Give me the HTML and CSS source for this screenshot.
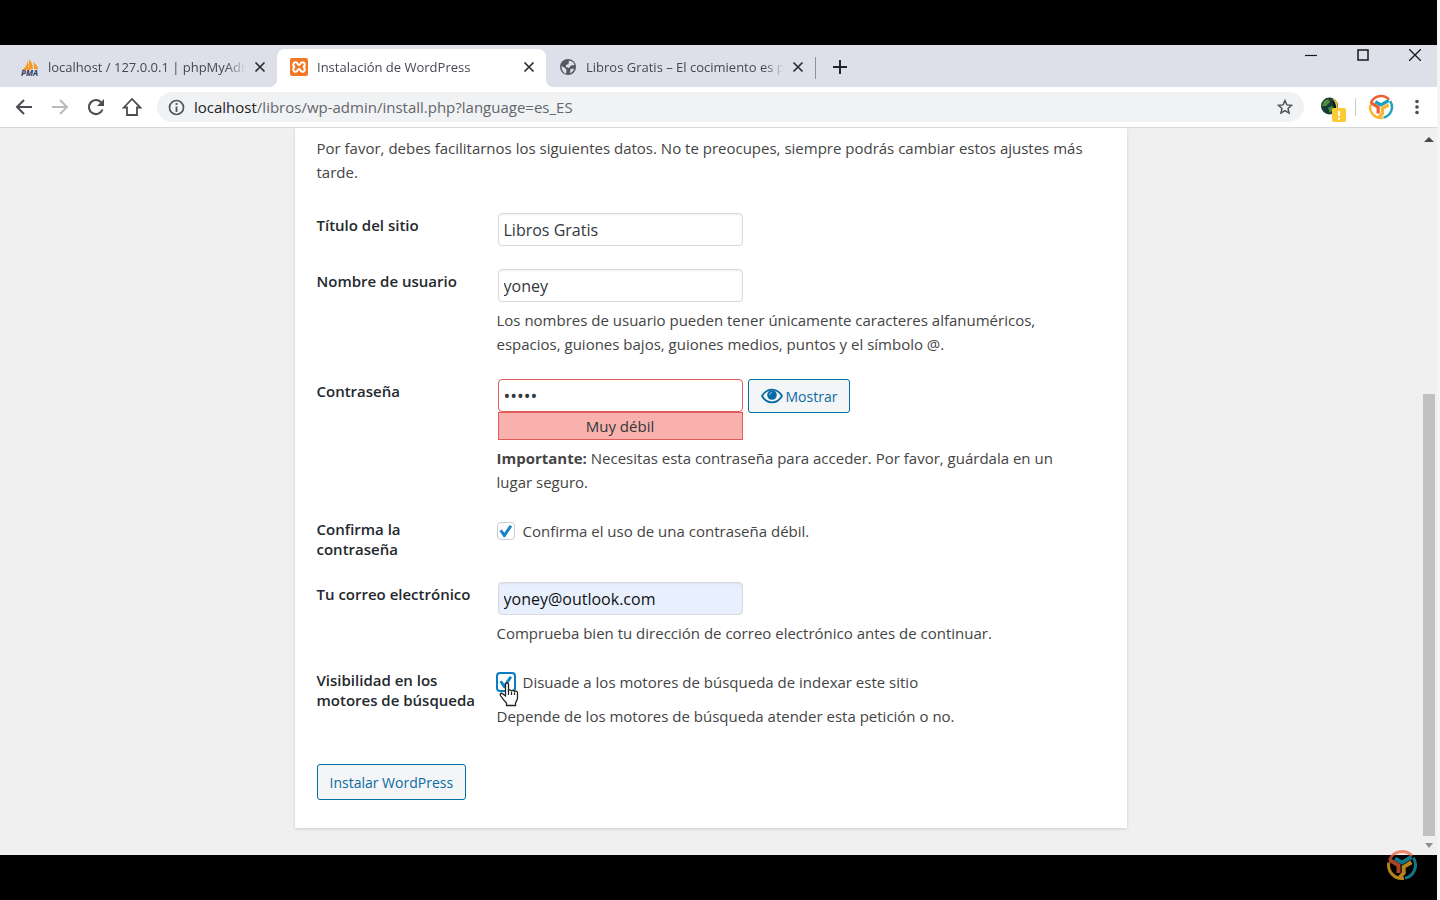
FILE: index.html
```html
<!DOCTYPE html>
<html lang="es">
<head>
<meta charset="utf-8">
<title>Instalación de WordPress</title>
<link rel="stylesheet" href="styles.css">
</head>
<body>
<svg class="defs" aria-hidden="true">
  <symbol id="close" viewBox="0 0 12 12"><path d="M1.500 1.500l9 9M10.500 1.500l-9 9" fill="none" stroke="#2b2d31" stroke-width="1.700"/></symbol>
  <symbol id="brand" viewBox="0 0 32 32">
    <g fill="none" stroke-width="3">
      <path d="M3.400 11.500A13.400 13.400 0 0 1 26 7" stroke="#ee5f35"/>
      <path d="M27.300 8.700A13.400 13.400 0 0 1 19 29.100" stroke="#1ba3bd"/>
      <path d="M18 29.300A13.400 13.400 0 0 1 2.800 13.500" stroke="#fbb42b"/>
    </g>
    <g fill="none" stroke-width="4">
      <path d="M3.500 11l9 5.200V24" stroke="#ee5f35"/>
      <path d="M9 9.500l7 4 9.500-5.500" stroke="#1ba3bd"/>
      <path d="M25.500 13.300l-7.800 4.500V24l-4.200 4.500" stroke="#fbb42b"/>
    </g>
  </symbol>
</svg>

<div class="screen">
  <header class="chrome">
    <div class="tabstrip">
      <div class="tab">
        <svg class="favicon" viewBox="0 0 20 20"><path d="M2 13C5 11 7 8 8 3l1 10zM9 13V2c3 3 4 7 4 10zM14 12c0-3 0-5-1-7 3 2 5 4 5 7z" fill="#f59a27"/><text x="1" y="19" font-size="8" font-weight="700" font-style="italic" fill="#34365f">PMA</text></svg>
        <span class="tab-title">localhost / 127.0.0.1 | phpMyAdmin</span>
        <button class="tab-close" aria-label="Cerrar pestaña"><svg width="12" height="12"><use href="#close"/></svg></button>
      </div>
      <div class="tab active">
        <svg class="favicon" viewBox="0 0 20 20"><rect x="1" y="1" width="18" height="18" rx="2" fill="#f37623"/><path d="M7.500 5.500c-4-1-4 4-1.500 4.500-2.500.5-2.500 5.500 1.500 4.500 1.500-.5 1-2.500 2.500-2.500s1 2 2.500 2.500c4 1 4-4 1.500-4.500 2.500-.5 2.500-5.500-1.500-4.500C11 6 11.500 8 10 8S9 6 7.500 5.500z" fill="none" stroke="#fff" stroke-width="2"/></svg>
        <span class="tab-title">Instalación de WordPress</span>
        <button class="tab-close" aria-label="Cerrar pestaña"><svg width="12" height="12"><use href="#close"/></svg></button>
      </div>
      <div class="tab">
        <svg class="favicon" viewBox="0 0 20 20"><circle cx="10" cy="10" r="8" fill="#55595f"/><path d="M3.500 9l3.500 2 1.500 2-.5 3.800C5.500 16 3.500 13 3.500 9zM11 3.500l4 1.500 1.500 3-3.500.5-2 2.500-3-1V8l2.500-1zM12.500 12l3.500-.5c-.5 2.500-2 4-4 4.800z" fill="#dde0e9"/></svg>
        <span class="tab-title">Libros Gratis – El cocimiento es poder</span>
        <button class="tab-close" aria-label="Cerrar pestaña"><svg width="12" height="12"><use href="#close"/></svg></button>
      </div>
      <span class="tab-divider"></span>
      <button class="new-tab" aria-label="Nueva pestaña"><svg width="14" height="14" viewBox="0 0 14 14"><path d="M7 0v14M0 7h14" stroke="#222529" stroke-width="2"/></svg></button>
      <div class="window-controls">
        <button aria-label="Minimizar"><svg width="12" height="12"><path d="M0 6.500h12" stroke="#17181b" stroke-width="1.200"/></svg></button>
        <button aria-label="Maximizar"><svg width="12" height="12"><rect x="1" y="1" width="10" height="10" fill="none" stroke="#17181b" stroke-width="1.500"/></svg></button>
        <button aria-label="Cerrar"><svg width="12" height="12"><path d="M0 0l12 12M12 0L0 12" stroke="#17181b" stroke-width="1.300"/></svg></button>
      </div>
    </div>

    <div class="toolbar">
      <nav class="nav-buttons">
        <button aria-label="Atrás"><svg width="18" height="18" viewBox="0 0 18 18"><path d="M17 9H2M9 2L2 9l7 7" fill="none" stroke="#4a4d52" stroke-width="2"/></svg></button>
        <button aria-label="Adelante"><svg width="18" height="18" viewBox="0 0 18 18"><path d="M1 9h15M9 2l7 7-7 7" fill="none" stroke="#b9bbbe" stroke-width="2"/></svg></button>
        <button aria-label="Recargar"><svg width="18" height="18" viewBox="0 0 18 18"><path d="M15.500 11.500A7 7 0 1 1 14 4.200" fill="none" stroke="#4a4d52" stroke-width="2.100"/><path d="M17 1v7h-7z" fill="#4a4d52"/></svg></button>
        <button aria-label="Inicio"><svg width="20" height="20" viewBox="0 0 20 20"><path d="M1.800 10.500L10 2l8.200 8.500H15V18H5v-7.500z" fill="none" stroke="#4a4d52" stroke-width="1.800"/></svg></button>
      </nav>
      <div class="omnibox">
        <svg width="17" height="17" viewBox="0 0 17 17"><circle cx="8.500" cy="8.500" r="7" fill="none" stroke="#53565b" stroke-width="1.700"/><path d="M8.500 7.500V13M8.500 4v2" stroke="#53565b" stroke-width="1.800"/></svg>
        <div class="url"><b>localhost</b>/libros/wp-admin/install.php?language=es_ES</div>
        <button aria-label="Añadir a marcadores"><svg width="16" height="16" viewBox="0 0 16 16"><path d="M8 1.500l1.900 4.400 4.700.4-3.600 3.100 1.100 4.700L8 11.600l-4.100 2.500L5 9.400 1.400 6.300l4.700-.4z" fill="none" stroke="#4a4d52" stroke-width="1.400"/></svg></button>
      </div>
      <div class="extensions">
        <button class="ext" aria-label="Extensión"><svg width="26" height="26" viewBox="0 0 26 26"><circle cx="9.500" cy="10" r="8.500" fill="#173d39"/><path d="M4 5l4-2 2 3-4 4H2zM8 12l4-2 2 3-4 4z" fill="#548d3c"/><path d="M12 2c6 2 7 8 4 13 0-5-1-9-4-13z" fill="#e8c33b"/><path d="M13 5c2 3 2.500 6 1.500 10" stroke="#111" stroke-width="2" fill="none"/><rect x="12" y="12" width="14" height="14" rx="2" fill="#fbcb32"/><path d="M19 15v5M19 21.500v2" stroke="#fff" stroke-width="2.200"/></svg></button>
        <span class="ext-divider"></span>
        <button class="profile" aria-label="Perfil"><svg width="26" height="26"><use href="#brand"/></svg></button>
        <button class="menu" aria-label="Menú"><svg width="4" height="16" fill="#4a4d52"><circle cx="2" cy="2.500" r="1.800"/><circle cx="2" cy="8" r="1.800"/><circle cx="2" cy="13.500" r="1.800"/></svg></button>
      </div>
    </div>
  </header>

  <div class="viewport">
    <main class="page">
      <form class="card">
        <p class="intro">Por favor, debes facilitarnos los siguientes datos. No te preocupes, siempre podrás cambiar estos ajustes más tarde.</p>

        <div class="row">
          <label class="row-label" for="site">Título del sitio</label>
          <div><input class="text" id="site" type="text" value="Libros Gratis"></div>
        </div>
        <div class="row">
          <label class="row-label" for="user">Nombre de usuario</label>
          <div>
            <input class="text" id="user" type="text" value="yoney">
            <p class="hint">Los nombres de usuario pueden tener únicamente caracteres alfanuméricos, espacios, guiones bajos, guiones medios, puntos y el símbolo @.</p>
          </div>
        </div>
        <div class="row">
          <label class="row-label" for="pass">Contraseña</label>
          <div>
            <div class="password">
              <input class="text weak" id="pass" type="password" value="yoney">
              <button class="btn show" type="button"><svg width="22" height="16" viewBox="0 0 22 16"><path d="M1 8c5-8.500 15-8.500 20 0-5 8.500-15 8.500-20 0z" fill="none" stroke="#0769a6" stroke-width="1.800"/><circle cx="11" cy="7" r="4.800" fill="#0769a6"/><path d="M8.500 7A2.500 2.500 0 0 1 11 4.500" stroke="#8fc0de" fill="none"/></svg>Mostrar</button>
            </div>
            <div class="strength">Muy débil</div>
            <p class="hint"><strong>Importante:</strong> Necesitas esta contraseña para acceder. Por favor, guárdala en un lugar seguro.</p>
          </div>
        </div>
        <div class="row">
          <label class="row-label" for="confirm">Confirma la contraseña</label>
          <div><label class="check"><input id="confirm" type="checkbox" checked>Confirma el uso de una contraseña débil.</label></div>
        </div>
        <div class="row">
          <label class="row-label" for="mail">Tu correo electrónico</label>
          <div>
            <input class="text autofill" id="mail" type="email" value="yoney@outlook.com">
            <p class="hint">Comprueba bien tu dirección de correo electrónico antes de continuar.</p>
          </div>
        </div>
        <div class="row">
          <label class="row-label" for="visibility">Visibilidad en los motores de búsqueda</label>
          <div>
            <label class="check focused"><input id="visibility" type="checkbox" checked>Disuade a los motores de búsqueda de indexar este sitio
              <svg class="pointer" width="20" height="25" viewBox="0 0 20 25"><path d="M6.500 14V2.500c0-2 3-2 3 0V9c0-1.500 3-1.500 3 .5 0-1.500 3-1.500 3 .5 0-1.500 3-1.300 3 .8V16c0 2-1.500 3.500-2 5v2.500H7.500V21C5.500 19 3 16 1.500 13.500c-1-2 1-3 2.500-1.500z" fill="#fff" stroke="#222" stroke-width="1.300"/><path d="M9.500 9v4M12.500 10v3M15.500 10.500V13" stroke="#222" stroke-width="1.200"/></svg>
            </label>
            <p class="hint">Depende de los motores de búsqueda atender esta petición o no.</p>
          </div>
        </div>

        <button class="btn submit" type="button">Instalar WordPress</button>
      </form>
    </main>
    <div class="scrollbar" aria-hidden="true">
      <svg width="10" height="6"><path d="M0 6l5-5 5 5z" fill="#4b4b4b"/></svg>
      <div class="track"><div class="thumb"></div></div>
      <svg width="10" height="6"><path d="M1 0l4 5 4-5z" fill="#8e8e8e"/></svg>
    </div>
  </div>
  <svg class="watermark" width="32" height="32"><use href="#brand"/></svg>
</div>
</body>
</html>
```
FILE: styles.css
```css
* { box-sizing: border-box; }

body {
  margin: 0;
  background: #f4f4f4;
  font-family: "Open Sans", "Noto Sans", sans-serif;
  font-size: 15px;
  color: #444;
}

button {
  border: 0;
  padding: 0;
  background: none;
  font: inherit;
  display: flex;
  align-items: center;
  justify-content: center;
}

p { margin: 0; }
.defs { position: absolute; width: 0; height: 0; }

.screen {
  position: relative;
  display: flex;
  flex-direction: column;
  height: 100vh;
  margin-right: 3px;
  padding: 45px 0;
  background: #000;
}

/* Tab strip */
.tabstrip {
  display: flex;
  align-items: flex-end;
  height: 42px;
  padding-left: 8px;
  background: #dde0e9;
}
.tab {
  position: relative;
  display: flex;
  align-items: center;
  width: 269px;
  height: 38px;
  padding: 0 9px 2px 12px;
  color: #45484e;
  font-size: 13px;
}
.tab.active { background: #fff; border-radius: 8px 8px 0 0; }
.tab.active::before,
.tab.active::after {
  content: "";
  position: absolute;
  bottom: 0;
  width: 8px;
  height: 8px;
}
.tab.active::before { right: 100%; background: radial-gradient(circle at 0 0, #dde0e9 8px, #fff 8px); }
.tab.active::after { left: 100%; background: radial-gradient(circle at 100% 0, #dde0e9 8px, #fff 8px); }
.favicon { flex: none; width: 20px; height: 20px; margin-right: 8px; }
.tab-title {
  flex: 1;
  overflow: hidden;
  white-space: nowrap;
  mask-image: linear-gradient(to left, transparent, #000 20px);
}
.tab-close { width: 16px; height: 16px; margin-left: 6px; }
.tab-divider { width: 1px; height: 22px; margin-bottom: 8px; background: #8d9096; }
.new-tab { width: 28px; height: 28px; margin: 0 0 6px 10px; }
.window-controls { display: flex; align-self: flex-start; gap: 8px; margin-left: auto; }
.window-controls button { width: 44px; height: 20px; }

/* Toolbar */
.toolbar {
  display: flex;
  align-items: center;
  height: 41px;
  padding-left: 6px;
  background: #fff;
  border-bottom: 1px solid #d6d7da;
}
.nav-buttons { display: flex; }
.nav-buttons button { width: 36px; height: 30px; }
.omnibox {
  flex: 1;
  display: flex;
  align-items: center;
  gap: 9px;
  height: 30px;
  margin-left: 7px;
  padding: 0 11px;
  border-radius: 15px;
  background: #f1f2f4;
}
.url { flex: 1; color: #63666b; font-size: 15px; }
.url b { font-weight: 400; color: #222; }
.extensions { display: flex; align-items: center; padding-right: 8px; }
.ext { width: 51px; height: 28px; padding: 4px 0 0 6px; }
.ext-divider { width: 1px; height: 18px; background: #c9cbcf; }
.profile { width: 49px; height: 28px; }
.menu { width: 24px; height: 28px; }

/* Page */
.viewport { flex: 1; display: flex; min-height: 0; background: #f0f0f0; }
.page { flex: 1; overflow: hidden; }
.card {
  max-width: 832px;
  margin: 0 auto;
  padding: 8px 22px 28px;
  background: #fff;
  box-shadow: 0 1px 3px rgba(0, 0, 0, 0.15);
}
.intro { margin-bottom: 29px; line-height: 24px; }
.row { display: grid; grid-template-columns: 180px 1fr; margin-bottom: 23px; }
.row-label { padding: 2px 16px 0 0; color: #23282d; font-weight: 600; font-size: 15px; line-height: 20px; }
.row > div { max-width: 560px; }
.hint { margin-top: 6px; line-height: 24px; }
.hint strong { font-weight: 700; }

.text {
  display: block;
  width: 245px;
  height: 33px;
  margin-left: 1px;
  padding: 0 5px;
  border: 1px solid #d9dadc;
  border-radius: 4px;
  background: #fff;
  box-shadow: inset 0 1px 2px rgba(0, 0, 0, 0.07);
  color: #32373c;
  font: inherit;
  font-size: 16px;
}
.text.autofill { background: #e8f0fe; color: #111; }
.text.weak { border-color: #e35b5b; box-shadow: none; font-size: 18px; }
.password { display: flex; gap: 5px; height: 33px; }
.strength {
  width: 245px;
  height: 28px;
  margin-left: 1px;
  border: 1px solid #e35b5b;
  background: #f8b1ad;
  color: #32373c;
  line-height: 26px;
  text-align: center;
}

.btn { border: 1px solid #0071a1; border-radius: 3px; background: #f3f5f6; color: #0b6ba3; font-size: 14px; }
.show { height: 34px; padding: 0 12px; gap: 3px; }
.submit { height: 36px; padding: 0 12px; margin-top: 36px; }

.check { position: relative; display: flex; align-items: center; gap: 8px; height: 28px; }
.check + .hint { margin-top: 8px; }
.check input {
  appearance: none;
  width: 18px;
  height: 18px;
  margin: 0;
  border: 1px solid #c9cdd1;
  border-radius: 4px;
  background: #fff;
}
.check input:checked::before {
  content: "";
  display: block;
  width: 14px;
  height: 14px;
  margin: 1px;
  background: #1583c4;
  clip-path: polygon(7% 50%, 23% 40%, 42% 62%, 80% 8%, 97% 17%, 47% 94%, 37% 94%);
}
.check.focused { margin-left: -1px; gap: 7px; }
.check.focused input { width: 20px; height: 20px; border: 2px solid #0b7cc0; }
.pointer { position: absolute; left: 3px; top: 14px; }

/* Scrollbar */
.scrollbar { display: flex; flex-direction: column; align-items: center; width: 16px; padding: 8px 0 6px; }
.track { flex: 1; width: 12px; padding: 4px 0 7px; display: flex; flex-direction: column; justify-content: flex-end; }
.thumb { height: 64%; background: #c1c1c1; }

.watermark { position: absolute; right: 19px; bottom: 19px; opacity: 0.72; }
```
